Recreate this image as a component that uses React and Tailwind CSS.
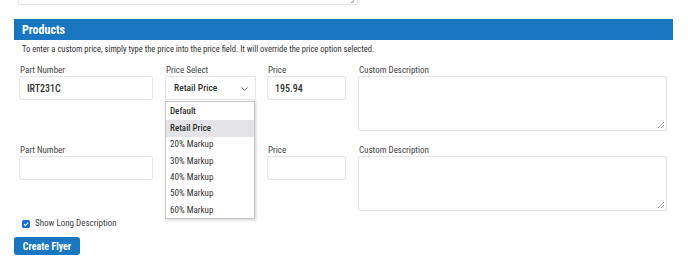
import { useState } from 'react';

const options = ['Default', 'Retail Price', '20% Markup', '30% Markup', '40% Markup', '50% Markup', '60% Markup'];

const ResizeHandle = () => (
  <svg className="absolute right-[2px] bottom-[2px]" width="7" height="7" viewBox="0 0 7 7">
    <path d="M7 1L1 7M7 4L4 7M7 6.5L6.5 7" stroke="#888" strokeWidth="0.8" />
  </svg>
);

const Field = ({ label, width, children }) => (
  <div className="flex flex-col" style={{ width }}>
    <div className="pl-[1px] text-[9px] leading-[11px] text-[#444] [font-stretch:condensed]">{label}</div>
    {children}
  </div>
);

const Box = ({ value, h = 'h-[24px]' }) => (
  <div className={`${h} border border-[#e6e6e6] rounded-[2px] flex items-center pl-[7px] text-[10px] font-medium text-[#333] [font-stretch:condensed]`}>
    {value}
  </div>
);

const ProductRow = ({ part, price, selected, showSelect }) => (
  <div className="flex pl-[19px]">
    <Field label="Part Number" width={134}>
      <Box value={part} />
    </Field>
    <div className="ml-[12px]">
      <Field label={showSelect ? 'Price Select' : '\u00a0'} width={91}>
        {showSelect ? (
          <div className="relative h-[24px] border border-[#e6e6e6] rounded-[2px] flex items-center pl-[8px] text-[9.5px] font-medium text-[#333] [font-stretch:condensed]">
            {selected}
            <svg className="absolute right-[7px] top-[10px]" width="7" height="4" viewBox="0 0 7 4">
              <path d="M0.5 0.5L3.5 3.5L6.5 0.5" fill="none" stroke="#555" strokeWidth="0.9" />
            </svg>
          </div>
        ) : (
          <div className="h-[24px]" />
        )}
      </Field>
    </div>
    <div className="ml-[11px]">
      <Field label="Price" width={79}>
        <Box value={price} />
      </Field>
    </div>
    <div className="ml-[12px]">
      <Field label="Custom Description" width={309}>
        <div className="relative h-[55px] border border-[#e6e6e6] rounded-[2px]">
          <ResizeHandle />
        </div>
      </Field>
    </div>
  </div>
);

export default function App() {
  const [checked] = useState(true);
  return (
    <div className="relative w-[688px] h-[275px] overflow-hidden bg-white" style={{ fontFamily: 'Roboto, "Liberation Sans", sans-serif' }}>
      {/* previous textarea, cut off at top */}
      <div className="relative ml-[18px] w-[340px] h-[5px] border-x border-b border-[#e6e6e6] rounded-b-[2px]">
        <svg className="absolute right-[3px] bottom-[1px]" width="5" height="3" viewBox="0 0 5 3">
          <path d="M5 0L2 3M5 1.5L3.5 3" stroke="#888" strokeWidth="0.8" />
        </svg>
      </div>

      {/* Products header */}
      <div className="ml-[14px] mt-[14px] w-[659px] h-[21px] bg-[#1877c0] flex items-center pl-[8px] text-white text-[12px] font-bold [font-stretch:condensed]">
        Products
      </div>
      <div className="pl-[22px] mt-[3px] text-[8.5px] leading-[12px] text-[#333] [font-stretch:condensed]">
        To enter a custom price, simply type the price into the price field. It will override the price option selected.
      </div>

      <div className="mt-[10px]">
        <ProductRow part="IRT231C" price="195.94" selected="Retail Price" showSelect />
      </div>
      <div className="mt-[14px]">
        <ProductRow part="" price="" showSelect={false} />
      </div>

      {/* Show long description */}
      <div className="flex items-center mt-[8px] pl-[22px] h-[9px]">
        <div className="w-[8px] h-[8px] rounded-[1.5px] bg-[#1a6fd0] flex items-center justify-center">
          {checked && (
            <svg width="6" height="6" viewBox="0 0 6 6">
              <path d="M1 3.2L2.4 4.6L5 1.6" fill="none" stroke="#fff" strokeWidth="1.1" />
            </svg>
          )}
        </div>
        <span className="ml-[5px] text-[9px] text-[#444] [font-stretch:condensed]">Show Long Description</span>
      </div>

      <button className="ml-[14px] mt-[9px] w-[66px] h-[18px] rounded-[3px] bg-[#1877c0] text-white text-[10px] font-bold [font-stretch:condensed] flex items-center justify-center">
        Create Flyer
      </button>

      {/* open dropdown */}
      <div className="absolute left-[165px] top-[101px] w-[90px] h-[118px] bg-white border border-[#c8c8c8] shadow-[1px_1px_3px_rgba(0,0,0,0.2)] pt-[2px]">
        {options.map((o, i) => (
          <div
            key={o}
            className={`h-[16.4px] flex items-center pl-[4px] text-[9px] text-[#333] [font-stretch:condensed] ${
              o === 'Retail Price' ? 'bg-[#e4e4e8]' : ''
            } ${i < 2 ? 'font-medium' : ''}`}
          >
            {o}
          </div>
        ))}
      </div>
    </div>
  );
}
